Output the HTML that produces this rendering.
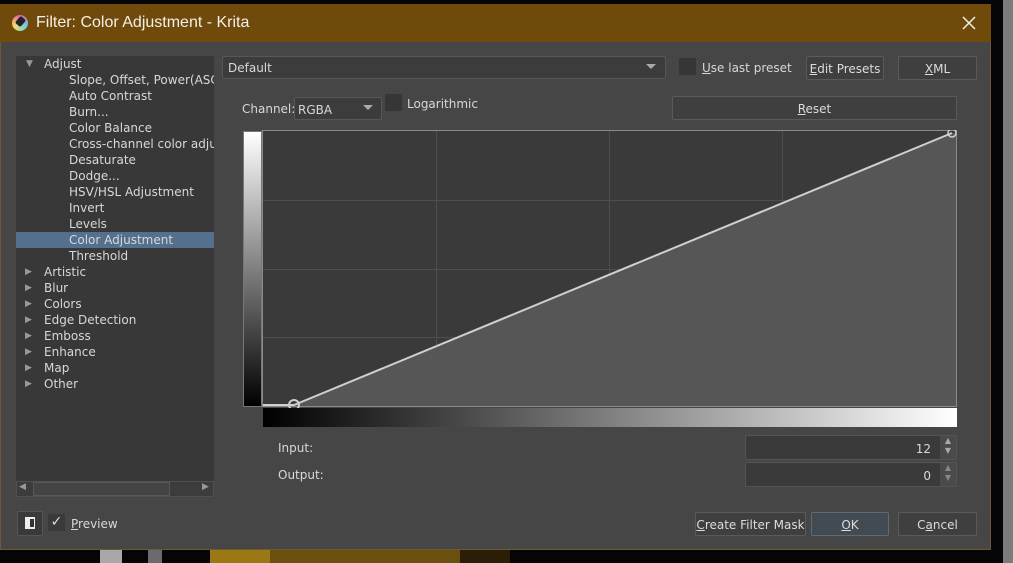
<!DOCTYPE html>
<html><head><meta charset="utf-8"><style>
*{margin:0;padding:0;box-sizing:border-box}
body{width:1013px;height:563px;background:#050508;position:relative;overflow:hidden;font-family:"DejaVu Sans","Liberation Sans",sans-serif;font-size:12px;color:#d8d8d8}
.a{position:absolute}
.btn{position:absolute;background:#3f3f3f;border:1px solid #5a5a5a;border-radius:2px;text-align:center;color:#dcdcdc;font-size:12px}
u{text-decoration:underline}
.tree{overflow:hidden}
.tree div{position:absolute;white-space:nowrap;height:16px;line-height:16px}
</style></head><body>
<div class="a" style="left:1003px;top:0;width:10px;height:563px;background:#7b7b7b"></div>
<div class="a" style="left:100px;top:550px;width:22px;height:13px;background:#a8a8a8"></div>
<div class="a" style="left:148px;top:550px;width:14px;height:13px;background:#6a6a70"></div>
<div class="a" style="left:210px;top:550px;width:60px;height:13px;background:#9a7814"></div>
<div class="a" style="left:270px;top:550px;width:190px;height:13px;background:#6a500e"></div>
<div class="a" style="left:460px;top:550px;width:50px;height:13px;background:#2a1e06"></div>
<div class="a" style="left:0;top:4px;width:991px;height:546px;background:#464646;border:1px solid #6e5a30"></div>
<div class="a" style="left:0;top:4px;width:991px;height:38px;background:#6f4a0b"></div>
<div class="a" style="left:12px;top:15px;width:16px;height:16px;border-radius:50%;background:conic-gradient(#e85ba8,#6fd0e8,#f0e060,#e85ba8)"></div>
<div class="a" style="left:17px;top:17px;width:7px;height:9px;background:#222;transform:rotate(40deg);border-radius:2px"></div>
<div class="a" style="left:36px;top:14px;font-family:'Liberation Sans',sans-serif;font-size:16px;color:#f4f0e8">Filter: Color Adjustment - Krita</div>
<svg class="a" style="left:962px;top:16px" width="14" height="14"><path d="M1 1L13 13M13 1L1 13" stroke="#f0f0f0" stroke-width="1.5"/></svg>

<div class="a tree" style="left:16px;top:56px;width:198px;height:426px;background:#383838">
<div style="left:10px;top:0px;font-size:9px;color:#999">▼</div>
<div style="left:28px;top:0px">Adjust</div>
<div style="left:53px;top:16px">Slope, Offset, Power(ASC</div>
<div style="left:53px;top:32px">Auto Contrast</div>
<div style="left:53px;top:48px">Burn...</div>
<div style="left:53px;top:64px">Color Balance</div>
<div style="left:53px;top:80px">Cross-channel color adjus</div>
<div style="left:53px;top:96px">Desaturate</div>
<div style="left:53px;top:112px">Dodge...</div>
<div style="left:53px;top:128px">HSV/HSL Adjustment</div>
<div style="left:53px;top:144px">Invert</div>
<div style="left:53px;top:160px">Levels</div>
<div style="left:0;top:176px;width:198px;background:#53708f"></div>
<div style="left:53px;top:176px">Color Adjustment</div>
<div style="left:53px;top:192px">Threshold</div>
<div style="left:9px;top:208px;font-size:9px;color:#999">▶</div><div style="left:28px;top:208px">Artistic</div>
<div style="left:9px;top:224px;font-size:9px;color:#999">▶</div><div style="left:28px;top:224px">Blur</div>
<div style="left:9px;top:240px;font-size:9px;color:#999">▶</div><div style="left:28px;top:240px">Colors</div>
<div style="left:9px;top:256px;font-size:9px;color:#999">▶</div><div style="left:28px;top:256px">Edge Detection</div>
<div style="left:9px;top:272px;font-size:9px;color:#999">▶</div><div style="left:28px;top:272px">Emboss</div>
<div style="left:9px;top:288px;font-size:9px;color:#999">▶</div><div style="left:28px;top:288px">Enhance</div>
<div style="left:9px;top:304px;font-size:9px;color:#999">▶</div><div style="left:28px;top:304px">Map</div>
<div style="left:9px;top:320px;font-size:9px;color:#999">▶</div><div style="left:28px;top:320px">Other</div>
</div>
<div class="a" style="left:16px;top:481px;width:198px;height:16px;background:#3c3c3c;border:1px solid #505050"></div>
<div class="a" style="left:33px;top:482px;width:137px;height:14px;background:#444;border:1px solid #585858"></div>
<div class="a" style="left:19px;top:482px;font-size:9px;color:#999">◀</div>
<div class="a" style="left:202px;top:482px;font-size:9px;color:#999">▶</div>

<div class="a" style="left:17px;top:511px;width:26px;height:25px;background:#3a3a3a;border:1px solid #555;border-radius:2px"></div>
<div class="a" style="left:25px;top:517px;width:10px;height:12px;background:#eee;border:2px solid #eee;border-left-width:3px"><div style="width:4px;height:8px;background:#333;margin-left:2px"></div></div>
<div class="a" style="left:48px;top:514px;width:17px;height:17px;background:#3a3a3a;color:#ddd;font-size:14px;text-align:center;line-height:17px">✓</div>
<div class="a" style="left:71px;top:517px"><u>P</u>review</div>

<div class="a" style="left:222px;top:56px;width:444px;height:23px;background:#3c3c3c;border:1px solid #575757;border-radius:2px;padding:4px 5px">Default</div>
<div class="a" style="left:646px;top:64px;border-left:5px solid transparent;border-right:5px solid transparent;border-top:5px solid #aaa"></div>
<div class="a" style="left:679px;top:58px;width:17px;height:17px;background:#363636"></div>
<div class="a" style="left:702px;top:61px"><u>U</u>se last preset</div>
<div class="btn" style="left:806px;top:56px;width:78px;height:24px;line-height:24px"><u>E</u>dit Presets</div>
<div class="btn" style="left:898px;top:56px;width:79px;height:24px;line-height:24px"><u>X</u>ML</div>

<div class="a" style="left:242px;top:102px">Channel:</div>
<div class="a" style="left:294px;top:97px;width:88px;height:23px;background:#3c3c3c;border:1px solid #575757;border-radius:2px;padding:5px 3px">RGBA</div>
<div class="a" style="left:363px;top:105px;border-left:5px solid transparent;border-right:5px solid transparent;border-top:5px solid #aaa"></div>
<div class="a" style="left:385px;top:94px;width:17px;height:17px;background:#363636"></div>
<div class="a" style="left:407px;top:97px">Logarithmic</div>
<div class="btn" style="left:672px;top:96px;width:285px;height:24px;line-height:24px"><u>R</u>eset</div>

<div class="a" style="left:243px;top:131px;width:19px;height:276px;background:linear-gradient(#fff,#000);border:1px solid #777"></div>
<div class="a" style="left:263px;top:408px;width:694px;height:19px;background:linear-gradient(90deg,#000,#fff)"></div>
<svg class="a" style="left:262px;top:130px" width="696" height="278">
<rect x="0.5" y="0.5" width="694" height="276" fill="#3a3a3a" stroke="#8a8a8a"/>
<g stroke="#4e4e4e" stroke-width="1"><line x1="174.5" y1="1" x2="174.5" y2="276"/><line x1="347.5" y1="1" x2="347.5" y2="276"/><line x1="520.5" y1="1" x2="520.5" y2="276"/><line x1="1" y1="70.5" x2="694" y2="70.5"/><line x1="1" y1="139.5" x2="694" y2="139.5"/><line x1="1" y1="207.5" x2="694" y2="207.5"/></g>
<polygon points="1,275 32,275 690,3 694,3 694,276 1,276" fill="#565656"/>
<polyline points="1,275 32,275 690,3" fill="none" stroke="#cfcfcf" stroke-width="2"/>
<circle cx="32" cy="275" r="5" fill="none" stroke="#cfcfcf" stroke-width="2"/>
<circle cx="690" cy="3" r="4" fill="none" stroke="#cfcfcf" stroke-width="1.5"/>
</svg>

<div class="a" style="left:278px;top:441px">Input:</div>
<div class="a" style="left:278px;top:468px">Output:</div>
<div class="a" style="left:745px;top:435px;width:212px;height:25px;background:#3a3a3a;border:1px solid #545454;border-radius:2px;text-align:right;padding:6px 25px 0 0">12</div>
<div class="a" style="left:745px;top:462px;width:212px;height:25px;background:#3a3a3a;border:1px solid #545454;border-radius:2px;text-align:right;padding:6px 25px 0 0">0</div>
<div class="a" style="left:940px;top:436px;width:16px;height:23px;background:#4a4a4a;color:#aaa;font-size:8px;line-height:10px;text-align:center">▲<br>▼</div>
<div class="a" style="left:940px;top:463px;width:16px;height:23px;background:#4a4a4a;color:#888;font-size:8px;line-height:10px;text-align:center">▲<br>▼</div>

<div class="btn" style="left:695px;top:512px;width:111px;height:24px;line-height:24px"><u>C</u>reate Filter Mask</div>
<div class="btn" style="left:811px;top:512px;width:78px;height:24px;line-height:24px;background:#424a52;border-color:#5d6a78"><u>O</u>K</div>
<div class="btn" style="left:898px;top:512px;width:79px;height:24px;line-height:24px">C<u>a</u>ncel</div>
</body></html>
